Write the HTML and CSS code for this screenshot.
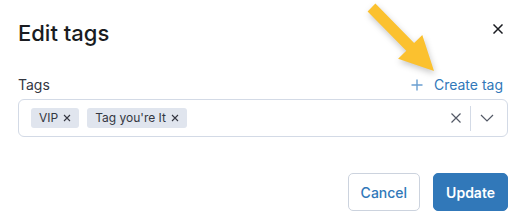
FILE: index.html
```html
<!DOCTYPE html>
<html>
<head>
<meta charset="utf-8">
<link rel="stylesheet" href="styles.css">
</head>
<body>
<div class="modal">
  <header class="modal-header">
    <h1 class="title">Edit tags</h1>
    <button class="close" aria-label="Close">
      <svg width="10" height="10" viewBox="0 0 10 10"><path d="M1 1L9 9M9 1L1 9" stroke="#1a1c21" stroke-width="1.5" stroke-linecap="square"/></svg>
    </button>
  </header>
  <div class="field">
    <div class="label-row">
      <label class="label">Tags</label>
      <a class="create">
        <svg class="plus" width="12" height="12" viewBox="0 0 12 12"><path d="M6 0.5V11.5M0.5 6H11.5" stroke="#6a9fd1" stroke-width="1.4"/></svg>
        <span>Create tag</span>
      </a>
    </div>
    <div class="combo">
      <div class="chips">
        <span class="chip">VIP<svg class="chip-x" width="8" height="8" viewBox="0 0 8 8"><path d="M1 1L7 7M7 1L1 7" stroke="#343741" stroke-width="1.1"/></svg></span>
        <span class="chip">Tag you're It<svg class="chip-x" width="8" height="8" viewBox="0 0 8 8"><path d="M1 1L7 7M7 1L1 7" stroke="#343741" stroke-width="1.1"/></svg></span>
      </div>
      <div class="controls">
        <svg class="clear" width="10" height="10" viewBox="0 0 10 10"><path d="M0.5 0.5L9.5 9.5M9.5 0.5L0.5 9.5" stroke="#535966" stroke-width="1.2"/></svg>
        <span class="divider"></span>
        <svg class="chevron" width="14" height="8" viewBox="0 0 14 8"><path d="M1 1L7 7L13 1" fill="none" stroke="#535966" stroke-width="1.2"/></svg>
      </div>
    </div>
  </div>
  <footer class="footer">
    <button class="btn btn-cancel">Cancel</button>
    <button class="btn btn-update">Update</button>
  </footer>
</div>
<svg class="arrow" width="522" height="222" viewBox="0 0 522 222">
  <polygon points="375.4,3.6 414.1,42.9 422.3,34.9 434,71 398.1,58.7 406.3,50.7 367.6,11.4" fill="#fbc12f"/>
</svg>
</body>
</html>
```
FILE: styles.css
```css
html, body {
  margin: 0;
  padding: 0;
  background: #ffffff;
}
body {
  width: 522px;
  height: 222px;
  overflow: hidden;
  position: relative;
  font-family: Inter, "Noto Sans", sans-serif;
  color: #343741;
}
.modal {
  padding: 17px 14px 0 18px;
  display: flex;
  flex-direction: column;
}
.modal-header {
  display: flex;
  justify-content: space-between;
  align-items: flex-start;
}
.title {
  margin: 0;
  font-size: 22px;
  line-height: 32px;
  font-weight: 500;
  color: #1a1c21;
}
.close {
  margin-top: 2px;
  width: 20px;
  height: 20px;
  padding: 0;
  border: 0;
  background: none;
  display: flex;
  align-items: center;
  justify-content: center;
}
.field {
  margin-top: 26px;
  display: flex;
  flex-direction: column;
  gap: 4px;
}
.label-row {
  display: flex;
  justify-content: space-between;
  align-items: center;
  height: 20px;
}
.label {
  font-size: 14px;
  line-height: 20px;
  color: #343741;
}
.create {
  display: flex;
  align-items: center;
  gap: 11px;
  font-size: 14px;
  line-height: 20px;
  color: #3178b9;
  margin-right: 5px;
}
.combo {
  height: 38px;
  box-sizing: border-box;
  border: 1px solid #d3dae6;
  border-radius: 6px;
  display: flex;
  align-items: center;
  justify-content: space-between;
  padding: 0 10px 0 12px;
}
.chips {
  display: flex;
  gap: 8px;
}
.chip {
  display: flex;
  align-items: center;
  gap: 5px;
  height: 20px;
  padding: 0 8px 0 8px;
  background: #e0e5ee;
  border-radius: 3px;
  font-size: 12px;
  line-height: 20px;
  color: #343741;
}
.controls {
  display: flex;
  align-items: center;
}
.clear {
  margin-right: 9px;
}
.divider {
  width: 1px;
  height: 25px;
  background: #d3dae6;
  margin-right: 9px;
}
.chevron {
  margin-right: 3px;
}
.footer {
  margin-top: 36px;
  display: flex;
  justify-content: flex-end;
  gap: 13px;
}
.btn {
  height: 38px;
  box-sizing: border-box;
  border-radius: 5px;
  font-family: Inter, "Noto Sans", sans-serif;
  font-size: 14px;
  padding: 0 12px;
}
.btn-cancel {
  background: #ffffff;
  border: 1px solid #ccd3de;
  color: #3178b9;
  font-weight: 500;
}
.btn-update {
  background: #3178b9;
  border: 1px solid #3178b9;
  color: #ffffff;
  font-weight: 600;
}
.arrow {
  position: absolute;
  top: 0;
  left: 0;
  pointer-events: none;
  filter: drop-shadow(1px 3px 3px rgba(0, 0, 0, 0.22));
}
```
